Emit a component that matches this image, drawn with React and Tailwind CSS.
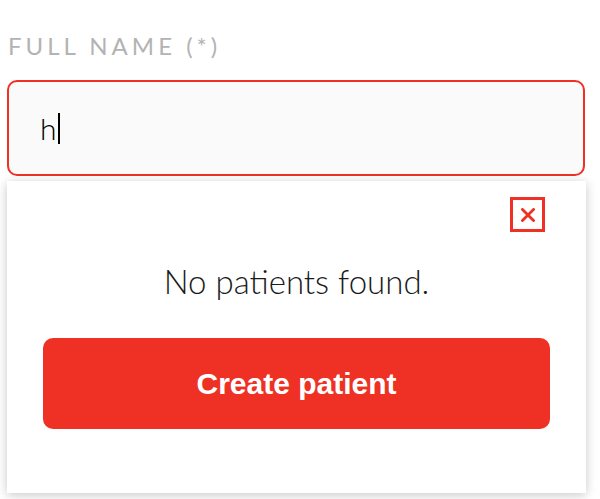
export default function App() {
  return (
    <div className="w-[600px] h-[499px] bg-white overflow-hidden px-[7px] pt-[32px]" style={{ fontFamily: "Lato, 'Noto Sans', sans-serif" }}>
      <div className="pl-[1px] text-[24px] leading-[28px] tracking-[4px] text-[#b3b3b3] font-normal">FULL NAME (*)</div>
      <div className="mt-[20px] w-[578px] h-[96px] border-2 border-[#ee3124] rounded-[10px] bg-[#fafafa] flex items-center pl-[31px]">
        <span className="text-[30px] text-black font-light leading-none">h</span>
        <span className="ml-[1px] w-[2px] h-[31px] bg-black"></span>
      </div>
      <div className="mt-[5px] w-[579px] h-[312px] bg-white shadow-[0_2px_10px_rgba(0,0,0,0.22)] flex flex-col px-[36px] pt-[16px]">
        <div className="flex justify-end pr-[5px]">
          <button className="w-[35px] h-[35px] border-[3px] border-[#ee3124] flex items-center justify-center">
            <svg width="14" height="14" viewBox="0 0 14 14">
              <path d="M1.5 1.5 L12.5 12.5 M12.5 1.5 L1.5 12.5" stroke="#ee3124" strokeWidth="2.8" strokeLinecap="square" />
            </svg>
          </button>
        </div>
        <div className="mt-[30px] text-center text-[33px] leading-[38px] font-light text-[#1a1a1a]">No patients found.</div>
        <button className="mt-[38px] h-[91px] w-full rounded-[10px] bg-[#ee3124] text-white text-[30px] font-bold" style={{ fontFamily: "'Liberation Sans', Arial, sans-serif" }}>Create patient</button>
      </div>
    </div>
  );
}
